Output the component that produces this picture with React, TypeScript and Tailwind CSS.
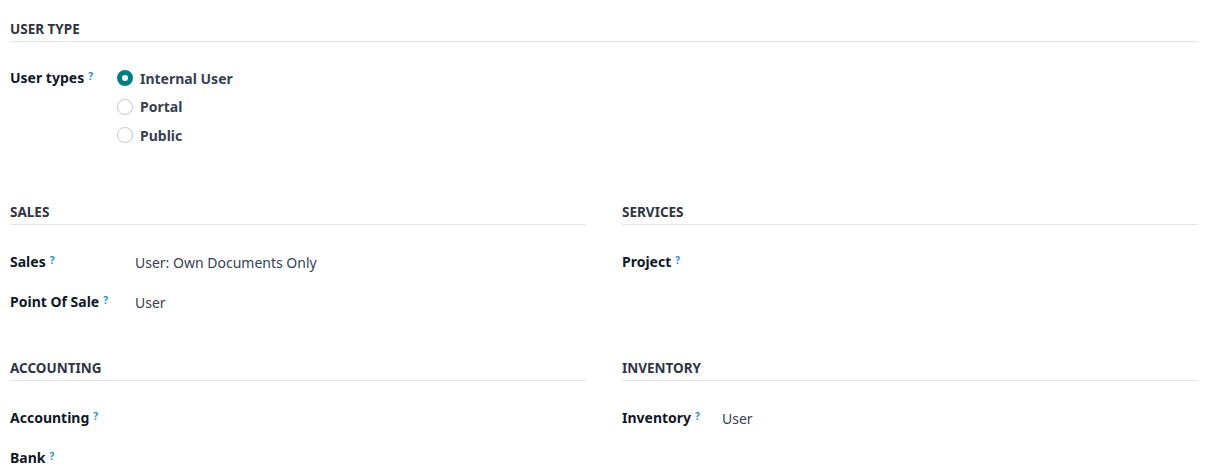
import React from "react";

const Help = () => (
  <sup className="ml-1 text-[10px] font-bold text-[#1f8fc7] relative -top-[3px]">?</sup>
);

const Section = ({ title, children }: { title: string; children?: React.ReactNode }) => (
  <div className="flex flex-col">
    <div className="text-[13.5px] font-bold text-[#2f3542] uppercase leading-[20px] pt-[19px] pb-[2px] border-b border-[#e2e4e8]">
      {title}
    </div>
    <div className="pt-[20px]">{children}</div>
  </div>
);

const Row = ({
  label,
  value,
  labelWidth,
}: {
  label: string;
  value?: string;
  labelWidth: string;
}) => (
  <div className="flex items-start h-[40px] pt-[6px]">
    <div className={`${labelWidth} shrink-0 font-bold text-[#111827] leading-[22px]`}>
      {label}
      <Help />
    </div>
    {value && <div className="text-[#374151] leading-[22px] pt-[1px]">{value}</div>}
  </div>
);

const Radio = ({ label, checked }: { label: string; checked?: boolean }) => (
  <label className="flex items-center gap-[7px] h-[28.5px]">
    {checked ? (
      <span className="w-4 h-4 rounded-full border-[5px] border-[#017e84] bg-white" />
    ) : (
      <span className="w-4 h-4 rounded-full border border-[#c6c9cf] bg-white" />
    )}
    <span className="font-bold text-[#374151]">{label}</span>
  </label>
);

export default function App() {
  return (
    <div
      className="w-[1215px] h-[475px] bg-white overflow-hidden px-[10px] text-[14px]"
      style={{ fontFamily: '"Noto Sans", "Open Sans", sans-serif' }}
    >
      <div className="w-[1188px]">
        <Section title="User Type">
          <div className="flex items-start pt-[2px]">
            <div className="w-[107px] shrink-0 font-bold text-[#111827] leading-[22px] pt-[3px]">
              User types
              <Help />
            </div>
            <div className="flex flex-col">
              <Radio label="Internal User" checked />
              <Radio label="Portal" />
              <Radio label="Public" />
            </div>
          </div>
        </Section>

        <div className="grid grid-cols-2 gap-x-[36px] pt-[33px]">
          <Section title="Sales">
            <Row label="Sales" value="User: Own Documents Only" labelWidth="w-[125px]" />
            <Row label="Point Of Sale" value="User" labelWidth="w-[125px]" />
          </Section>
          <Section title="Services">
            <Row label="Project" labelWidth="w-[100px]" />
          </Section>
          <div className="mt-[14px]">
            <Section title="Accounting">
              <Row label="Accounting" labelWidth="w-[125px]" />
              <Row label="Bank" labelWidth="w-[125px]" />
            </Section>
          </div>
          <div className="mt-[14px]">
            <Section title="Inventory">
              <Row label="Inventory" value="User" labelWidth="w-[100px]" />
            </Section>
          </div>
        </div>
      </div>
    </div>
  );
}
